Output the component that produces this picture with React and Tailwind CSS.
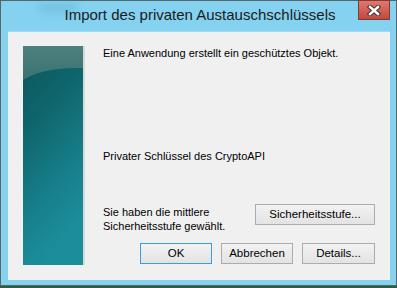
import React from "react";

function CloseIcon() {
  return (
    <svg width="14" height="11" viewBox="0 0 14 11">
      <path d="M3 2 L11 9 M11 2 L3 9" stroke="#3a3a3a" strokeWidth="4.4" strokeLinecap="square" fill="none" />
      <path d="M3 2 L11 9 M11 2 L3 9" stroke="#ffffff" strokeWidth="2.4" strokeLinecap="square" fill="none" />
    </svg>
  );
}

function SidePicture() {
  return (
    <svg width="60" height="219" viewBox="0 0 60 219" className="block">
      <defs>
        <linearGradient id="tealBody" x1="0" y1="0" x2="0.3" y2="1">
          <stop offset="0" stopColor="#0c565c" />
          <stop offset="0.35" stopColor="#0f646b" />
          <stop offset="0.75" stopColor="#17808c" />
          <stop offset="1" stopColor="#1b8e9b" />
        </linearGradient>
        <linearGradient id="tealTop" x1="0" y1="0" x2="0" y2="1">
          <stop offset="0" stopColor="#4d807e" />
          <stop offset="1" stopColor="#3a7371" />
        </linearGradient>
      </defs>
      <rect width="60" height="219" fill="url(#tealBody)" />
      <path d="M0 0 H60 V22 Q20 21 0 34 Z" fill="url(#tealTop)" />
    </svg>
  );
}

function Btn({ children, width, focused }) {
  return (
    <button
      className={
        "h-[21px] shrink-0 text-[11.5px] leading-none text-black bg-gradient-to-b from-[#f2f2f2] to-[#e3e3e3] " +
        (focused ? "border border-[#3c9ce8]" : "border border-[#acacac]") +
        " " +
        width
      }
    >
      {children}
    </button>
  );
}

export default function App() {
  return (
    <div className="w-[397px] h-[288px] bg-[#2f5f3a] font-['Liberation_Sans',Arial,sans-serif] overflow-hidden">
      <div className="w-[397px] h-[286px] border border-[#55676b] bg-[#85d1f0] flex flex-col pl-[7px] pr-[6px] pb-[5px]">
        <div className="relative h-[30px] shrink-0 flex items-center justify-center">
          <div className="absolute left-[30px] top-[2px] w-[40px] h-[10px] rounded-full bg-[#5fa9c8] opacity-40 blur-[4px]" />
          <span className="relative text-[15px] text-[#1b1b1b] mt-[-1px] ml-[2px]">
            Import des privaten Austauschschlüssels
          </span>
          <div className="absolute right-[0px] top-[-1px] w-[32px] h-[20px] border border-[#7c3d37] bg-gradient-to-b from-[#e0776e] to-[#c4483d] flex items-center justify-center">
            <CloseIcon />
          </div>
        </div>
        <div className="flex-1 bg-[#f0f0f0] border-t border-[#9fd9f2] flex pt-[14px] pl-[15px] pr-[15px]">
          <div className="w-[60px] h-[219px] shrink-0 shadow-[2px_0_0_#d9d9d9]">
            <SidePicture />
          </div>
          <div className="ml-[20px] flex-1 flex flex-col text-[11px] text-black">
            <div className="h-[15px] leading-[15px]">Eine Anwendung erstellt ein geschütztes Objekt.</div>
            <div className="mt-[88px] h-[15px] leading-[15px]">Privater Schlüssel des CryptoAPI</div>
            <div className="mt-[40px] flex justify-between items-start">
              <div className="mt-[1px] leading-[14px]">
                <div>Sie haben die mittlere</div>
                <div>Sicherheitsstufe gewählt.</div>
              </div>
              <Btn width="w-[120px]">Sicherheitsstufe...</Btn>
            </div>
            <div className="mt-[10px] flex justify-end gap-[9px]">
              <Btn width="w-[72px]" focused>OK</Btn>
              <Btn width="w-[72px]">Abbrechen</Btn>
              <Btn width="w-[73px]">Details...</Btn>
            </div>
          </div>
        </div>
      </div>
    </div>
  );
}
